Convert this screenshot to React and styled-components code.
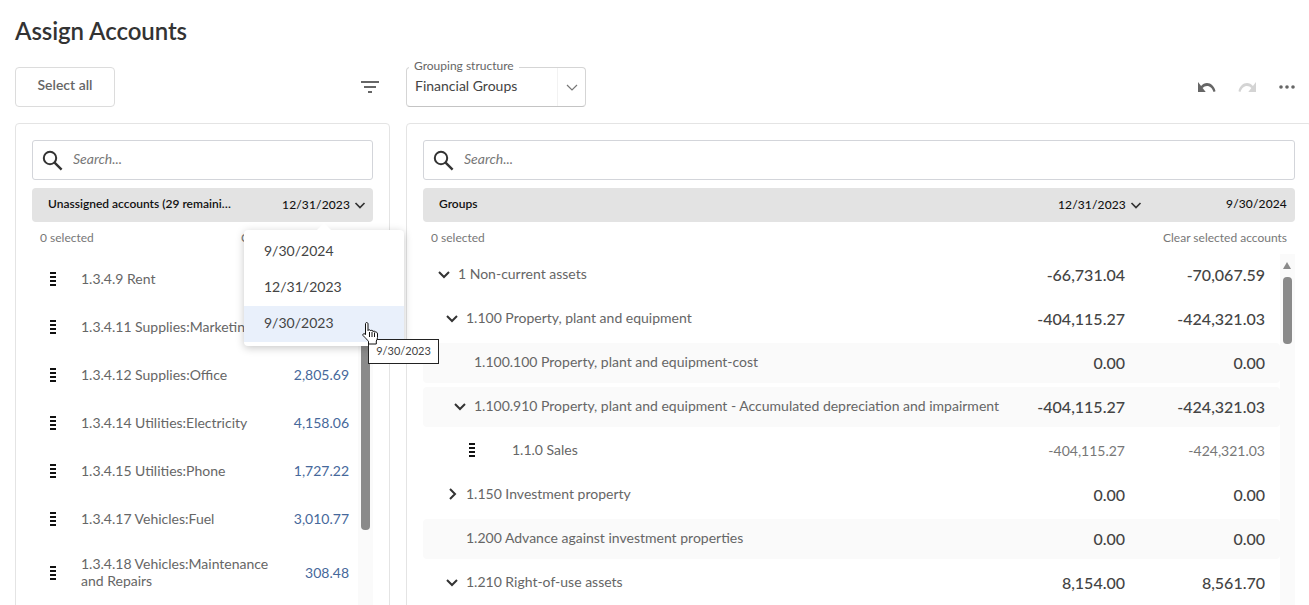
import React from "react";
import styled, {createGlobalStyle} from "styled-components";

const GlobalStyle = createGlobalStyle`
  html, body {
    margin: 0;
    padding: 0;
    background: #fff;
    font-family: "Lato", "Liberation Sans", sans-serif;
    color: #555;
  }
  * {
    box-sizing: border-box;
  }
`
const Page = styled.div`
  height: 100vh;
  overflow: hidden;
  padding-left: 15px;
`
const Title = styled.h1`
  height: 67px;
  margin: 0;
  padding-top: 16px;
  font-size: 24px;
  line-height: 29px;
  font-weight: 600;
  letter-spacing: -0.07px;
  color: #333;
`
const Toolbar = styled.div`
  display: flex;
  align-items: center;
  height: 40px;
  margin-bottom: 16px;
`
const SelectAll = styled.button`
  width: 100px;
  height: 40px;
  padding: 0 0 5px;
  background: #fff;
  border: 1px solid #dcdcdc;
  border-radius: 4px;
  font: 600 14px "Lato", sans-serif;
  color: #666;
`
const FilterBtn = styled.div`
  display: flex;
  width: 18px;
  margin-left: 246px;
  margin-right: 27px;
`
const SelectBox = styled.div`
  position: relative;
  display: flex;
  align-items: center;
  width: 180px;
  height: 40px;
  padding-left: 8px;
  border: 1px solid #d5d5d5;
  border-bottom-color: #c4c4c4;
  border-radius: 4px;
  font-size: 14px;
  color: #444;
`
const SelectLabel = styled.label`
  position: absolute;
  left: 2px;
  top: -9px;
  padding: 0 5px;
  background: #fff;
  font-size: 12px;
  line-height: 14px;
  color: #666;
`
const SelectValue = styled.span`
  flex: 1;
  padding-bottom: 3px;
`
const SelectArrow = styled.div`
  display: flex;
  align-items: center;
  justify-content: center;
  width: 28px;
  height: 100%;
  border-left: 1px solid #f2f2f2;
`
const Actions = styled.div`
  display: flex;
  align-items: center;
  gap: 22px;
  margin-left: auto;
  margin-right: 14px;
`
const DotsIcon = styled.svg`
  margin-left: 1px;
`
const Panels = styled.div`
  display: flex;
  gap: 16px;
  align-items: flex-start;
`
const Panel = styled.section`
  flex: none;
  width: ${p => p.$width}px;
  height: 520px;
  padding: 16px 16px 0;
  border: 1px solid #e4e4e4;
  border-radius: 4px;
`
const SearchBox = styled.div`
  display: flex;
  align-items: center;
  height: 40px;
  padding-left: 9px;
  margin-bottom: 8px;
  border: 1px solid #d3d5da;
  border-radius: 3px;
`
const SearchInput = styled.input`
  flex: 1;
  margin-left: 8px;
  padding: 0 2px 3px;
  border: none;
  outline: none;
  background: transparent;
  font: italic 14px "Lato", sans-serif;
  &::placeholder {
    color: #777;
  }
`
const HeaderBar = styled.div`
  position: relative;
  display: flex;
  align-items: center;
  height: 34px;
  padding: 0 6px 0 16px;
  background: #e3e3e3;
  border-radius: 4px;
  font-size: 12px;
  font-weight: 600;
  color: #111;
`
const HeaderLabel = styled.span`
  width: ${p => p.$width || 185}px;
  padding-bottom: 3px;
  white-space: nowrap;
  overflow: hidden;
  text-overflow: ellipsis;
`
const HeaderDate = styled.span`
  display: flex;
  align-items: center;
  gap: 3px;
  margin-left: ${p => p.$auto ? "auto" : "0"};
  font-weight: 500;
  letter-spacing: 0.13px;
`
const DateText = styled.span`
  padding-bottom: 1px;
`
const HeaderPlain = styled.span`
  width: 144px;
  padding-bottom: 3px;
  text-align: right;
  font-weight: 500;
  letter-spacing: 0.13px;
`
const Caption = styled.div`
  display: flex;
  justify-content: space-between;
  align-items: center;
  height: 33px;
  padding: 0 8px 3px;
  font-size: 12px;
  color: #777;
`
const ListArea = styled.div`
  display: flex;
`
const List = styled.div`
  flex: 1;
  min-width: 0;
`
const Track = styled.div`
  flex: none;
  width: 15px;
  min-height: 360px;
  margin-top: -1px;
  padding: 8px 3px 0;
  background: #fafafa;
`
const TrackArrow = styled.div`
  width: 0;
  height: 0;
  margin: 0 0 8px;
  border-left: 4.5px solid transparent;
  border-right: 4.5px solid transparent;
  border-bottom: 7px solid #8a8a8a;
`
const Thumb = styled.div`
  width: 9px;
  height: ${p => p.$height}px;
  background: #8a8a8a;
  border-radius: 4px;
`
const AccountRow = styled.div`
  display: flex;
  align-items: center;
  min-height: 48px;
  padding: 12px 9px 12px 18px;
  font-size: 14px;
  line-height: 17px;
`
const AccountName = styled.span`
  width: 205px;
  margin-left: 25px;
  margin-bottom: 2px;
  color: #666;
`
const AccountValue = styled.span`
  margin-left: auto;
  margin-bottom: 2px;
  color: #46689b;
`
const HandleIcon = styled.svg`
  flex: none;
  display: block;
`
const TreeRow = styled.div`
  display: flex;
  align-items: center;
  height: 40px;
  margin-bottom: 4px;
  padding-left: ${p => 13 + p.$level * 8}px;
  padding-bottom: 2px;
  padding-right: 15px;
  border-radius: 4px;
  background: ${p => p.$shaded ? "#fafafa" : "transparent"};
  font-size: 14px;
`
const SalesRow = styled(TreeRow)`
  padding-left: 46px;
`
const SalesName = styled.span`
  flex: 1;
  margin-left: 37px;
  padding-bottom: 2px;
  color: #666;
`
const ChevronSlot = styled.span`
  flex: none;
  display: flex;
  justify-content: center;
  width: 16px;
  margin-right: 6px;
`
const TreeName = styled.span`
  flex: 1;
  min-width: 0;
  padding-bottom: 2px;
  white-space: nowrap;
  color: #666;
`
const Amount = styled.span`
  flex: none;
  width: 140px;
  text-align: right;
  font-size: ${p => p.$small ? 14 : 16}px;
  font-weight: ${p => p.$small ? 400 : 500};
  color: ${p => p.$small ? "#777" : "#444"};
`
const DateMenu = styled.ul`
  position: absolute;
  z-index: 5;
  top: 42px;
  right: -31px;
  width: 160px;
  margin: 0;
  padding: 4px 0;
  list-style: none;
  background: #fff;
  border-radius: 4px;
  box-shadow: 0 2px 8px rgba(0, 0, 0, 0.22);
  &::before {
    content: "";
    position: absolute;
    top: -7px;
    left: 73px;
    border-left: 7px solid transparent;
    border-right: 7px solid transparent;
    border-bottom: 7px solid #fff;
  }
`
const MenuItem = styled.li`
  height: 36px;
  padding-left: 20px;
  line-height: 34px;
  font-size: 14px;
  font-weight: 400;
  color: #444;
  background: ${p => p.$active ? "#e9f0fb" : "#fff"};
`
const Cursor = styled.svg`
  position: absolute;
  z-index: 7;
  left: 118px;
  top: 92px;
`
const Tooltip = styled.div`
  position: absolute;
  z-index: 6;
  left: 124px;
  top: 109px;
  width: 71px;
  height: 25px;
  background: #fff;
  border: 1px solid #222;
  font-size: 11px;
  font-weight: 400;
  line-height: 22px;
  text-align: center;
  color: #444;
`

const Chevron = ({right, color = "#333", width = 2}) => (
    <svg width="14" height="14" viewBox="0 0 14 14" fill="none" style={{display: "block"}}>
        <path
            d={right ? "M5 2l5 5-5 5" : "M2 5l5 5 5-5"}
            stroke={color}
            strokeWidth={width}
        />
    </svg>
)

const SmallChevron = () => (
    <svg width="14" height="14" viewBox="0 0 14 14" fill="none" style={{display: "block"}}>
        <path d="M2.500 5l4.500 4.500L11.500 5" stroke="#333" strokeWidth="1.700"/>
    </svg>
)

// 4 bars, 2px each with 2px gaps
const Handle = () => (
    <HandleIcon width="6" height="14" viewBox="0 0 6 14" fill="#111">
        <rect y="0" width="6" height="2"/>
        <rect y="4" width="6" height="2"/>
        <rect y="8" width="6" height="2"/>
        <rect y="12" width="6" height="2"/>
    </HandleIcon>
)

const SearchIcon = () => (
    <svg width="21" height="21" viewBox="0 0 21 21" fill="none">
        <circle cx="8" cy="8" r="6.2" stroke="#333" strokeWidth="2"/>
        <path d="M12.6 12.6L19.6 19.6" stroke="#333" strokeWidth="2.4"/>
    </svg>
)

const accounts = [
    {name: "1.3.4.9 Rent", value: "1,320.00"},
    {name: "1.3.4.11 Supplies:Marketing", value: "940.15"},
    {name: "1.3.4.12 Supplies:Office", value: "2,805.69"},
    {name: "1.3.4.14 Utilities:Electricity", value: "4,158.06"},
    {name: "1.3.4.15 Utilities:Phone", value: "1,727.22"},
    {name: "1.3.4.17 Vehicles:Fuel", value: "3,010.77"},
    {name: "1.3.4.18 Vehicles:Maintenance and Repairs", value: "308.48"},
]

const groups = [
    {name: "1 Non-current assets", level: 0, chevron: "down", a: "-66,731.04", b: "-70,067.59"},
    {name: "1.100 Property, plant and equipment", level: 1, chevron: "down", a: "-404,115.27", b: "-424,321.03"},
    {name: "1.100.100 Property, plant and equipment-cost", level: 2, shaded: true, a: "0.00", b: "0.00"},
    {name: "1.100.910 Property, plant and equipment - Accumulated depreciation and impairment", level: 2, chevron: "down", shaded: true, a: "-404,115.27", b: "-424,321.03"},
    {name: "1.1.0 Sales", sales: true, a: "-404,115.27", b: "-424,321.03"},
    {name: "1.150 Investment property", level: 1, chevron: "right", a: "0.00", b: "0.00"},
    {name: "1.200 Advance against investment properties", level: 1, shaded: true, a: "0.00", b: "0.00"},
    {name: "1.210 Right-of-use assets", level: 1, chevron: "down", a: "8,154.00", b: "8,561.70"},
]

const dates = ["9/30/2024", "12/31/2023", "9/30/2023"]

let App = () => {
    return (
        <Page>
            <GlobalStyle/>
            <Title>Assign Accounts</Title>
            <Toolbar>
                <SelectAll>Select all</SelectAll>
                <FilterBtn>
                    <svg width="18" height="12" viewBox="0 0 18 12" fill="#666">
                        <rect x="0" y="0" width="18" height="2"/>
                        <rect x="3" y="5" width="12" height="2"/>
                        <rect x="7" y="10" width="4" height="2"/>
                    </svg>
                </FilterBtn>
                <SelectBox>
                    <SelectLabel>Grouping structure</SelectLabel>
                    <SelectValue>Financial Groups</SelectValue>
                    <SelectArrow>
                        <Chevron color="#777" width={1.2}/>
                    </SelectArrow>
                </SelectBox>
                <Actions>
                    <svg width="18" height="10" viewBox="2 7 21 9" preserveAspectRatio="none" fill="#666">
                        <path d="M12.5 8c-2.65 0-5.05.99-6.9 2.6L2 7v9h9l-3.62-3.62c1.39-1.16 3.16-1.88 5.12-1.88 3.54 0 6.55 2.31 7.6 5.5l2.37-.78C21.08 11.03 17.15 8 12.5 8z"/>
                    </svg>
                    <svg width="18" height="10" viewBox="1 7 21 9" preserveAspectRatio="none" fill="#d4d4d4">
                        <path d="M18.4 10.6C16.55 8.99 14.15 8 11.5 8c-4.65 0-8.58 3.03-9.96 7.22L3.9 16c1.05-3.19 4.05-5.5 7.6-5.5 1.95 0 3.73.72 5.12 1.88L13 16h9V7l-3.6 3.6z"/>
                    </svg>
                    <DotsIcon width="16" height="4" viewBox="0 0 16 4" fill="#666">
                        <circle cx="2" cy="2" r="1.8"/>
                        <circle cx="8" cy="2" r="1.8"/>
                        <circle cx="14" cy="2" r="1.8"/>
                    </DotsIcon>
                </Actions>
            </Toolbar>
            <Panels>
                <Panel $width={375}>
                    <SearchBox>
                        <SearchIcon/>
                        <SearchInput placeholder="Search..."/>
                    </SearchBox>
                    <HeaderBar>
                        <HeaderLabel>Unassigned accounts (29 remaining)</HeaderLabel>
                        <HeaderDate $auto><DateText>12/31/2023</DateText> <SmallChevron/></HeaderDate>
                        <DateMenu>
                            {dates.map((d, i) => (
                                <MenuItem key={d} $active={i === 2}>{d}</MenuItem>
                            ))}
                            <Cursor width="17" height="23" viewBox="0 0 17 23">
                                <path
                                    d="M4.5.5c1 0 1.500.7 1.500 1.500v6.500c0-.9 2.500-.9 2.500 0v.5c0-.9 2.500-.9 2.500 0v.8c0-.8 2.500-.8 2.500.2 1 0 2 .5 2 2v3.500c0 1.500-.8 2.500-1.200 3.500v3H6.500v-2.500c-1-1.500-3-3.500-5.500-6-.7-1 .5-2.500 2-1.500l.500.6V2c0-.8.500-1.500 1-1.500z"
                                    fill="#fff"
                                    stroke="#111"
                                    strokeWidth="1"
                                />
                                <path d="M7.500 10v5M10 10v5M12.500 10.500V15" stroke="#111" strokeWidth="1"/>
                            </Cursor>
                            <Tooltip>9/30/2023</Tooltip>
                        </DateMenu>
                    </HeaderBar>
                    <Caption>
                        <span>0 selected</span>
                        <span>Clear selected accounts</span>
                    </Caption>
                    <ListArea>
                        <List>
                            {accounts.map(a => (
                                <AccountRow key={a.name}>
                                    <Handle/>
                                    <AccountName>{a.name}</AccountName>
                                    <AccountValue>{a.value}</AccountValue>
                                </AccountRow>
                            ))}
                        </List>
                        <Track>
                            <TrackArrow/>
                            <Thumb $height={253}/>
                        </Track>
                    </ListArea>
                </Panel>
                <Panel $width={906}>
                    <SearchBox>
                        <SearchIcon/>
                        <SearchInput placeholder="Search..."/>
                    </SearchBox>
                    <HeaderBar>
                        <HeaderLabel $width={619}>Groups</HeaderLabel>
                        <HeaderDate><DateText>12/31/2023</DateText> <SmallChevron/></HeaderDate>
                        <HeaderPlain>9/30/2024</HeaderPlain>
                    </HeaderBar>
                    <Caption>
                        <span>0 selected</span>
                        <span>Clear selected accounts</span>
                    </Caption>
                    <ListArea>
                        <List>
                            {groups.map(g => g.sales ? (
                                <SalesRow key={g.name} $level={0}>
                                    <Handle/>
                                    <SalesName>{g.name}</SalesName>
                                    <Amount $small>{g.a}</Amount>
                                    <Amount $small>{g.b}</Amount>
                                </SalesRow>
                            ) : (
                                <TreeRow key={g.name} $level={g.level} $shaded={g.shaded}>
                                    <ChevronSlot>
                                        {g.chevron && <Chevron right={g.chevron === "right"}/>}
                                    </ChevronSlot>
                                    <TreeName>{g.name}</TreeName>
                                    <Amount>{g.a}</Amount>
                                    <Amount>{g.b}</Amount>
                                </TreeRow>
                            ))}
                        </List>
                        <Track>
                            <TrackArrow/>
                            <Thumb $height={67}/>
                        </Track>
                    </ListArea>
                </Panel>
            </Panels>
        </Page>
    )
}
export default App;
